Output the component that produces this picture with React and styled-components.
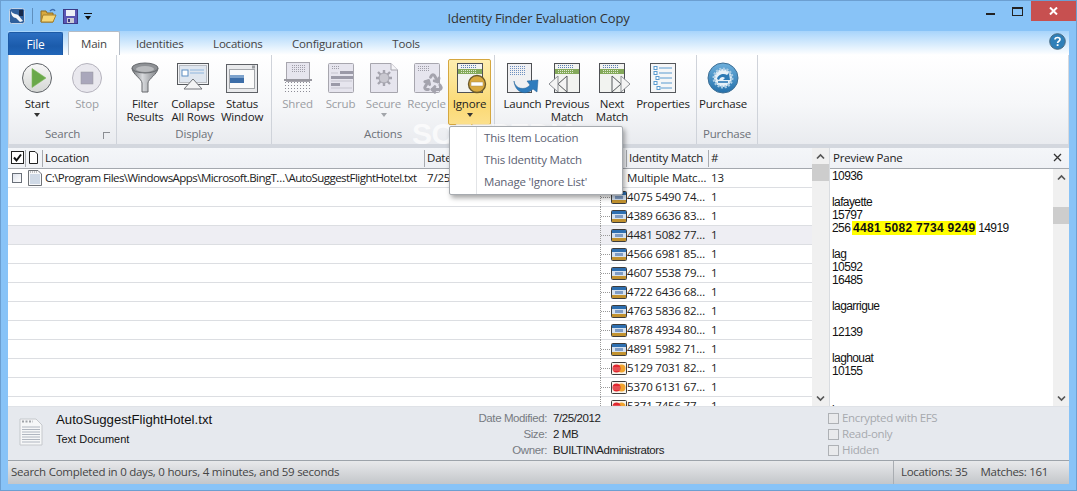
import React from 'react'
import styled, { createGlobalStyle } from 'styled-components'
import { Recycle } from 'lucide-react'

const GlobalStyle = createGlobalStyle`
    html, body {
        margin: 0;
        padding: 0;
        background: #88c3f7;
    }
    * {
        box-sizing: border-box;
    }
`

const uiFont = `"Open Sans", "Noto Sans", "Liberation Sans", sans-serif`
const docFont = `"Liberation Sans", Arial, sans-serif`

const Window = styled.div`
    position: relative;
    display: flex;
    flex-direction: column;
    width: 1077px;
    height: 491px;
    overflow: hidden;
    background: #88c3f7;
    border: 1px solid #6c9fd1;
    font-family: ${uiFont};
    font-size: 11.5px;
    letter-spacing: -0.2px;
    color: #222;
`

const TitleBar = styled.div`
    display: flex;
    align-items: flex-start;
    height: 30px;
    padding-left: 8px;
`

const QuickBar = styled.div`
    display: flex;
    align-items: center;
    gap: 6px;
    width: 100px;
    height: 30px;
`

const QuickSep = styled.div`
    width: 1px;
    height: 16px;
    margin: 0 1px;
    background: #5f8fbd;
`

const QuickArrow = styled.div`
    width: 8px;
    height: 7px;
    border-top: 1px solid #111;
    position: relative;
    &::after {
        content: '';
        position: absolute;
        left: 1px;
        top: 2px;
        border: 3px solid transparent;
        border-top: 4px solid #111;
    }
`

const Title = styled.div`
    flex: 1;
    padding: 8px 0 0 0;
    margin-left: -8px;
    text-align: center;
    font-size: 13px;
    color: #333;
`

const WindowControls = styled.div`
    display: flex;
    align-items: flex-start;
    width: 100px;
    justify-content: flex-end;
`

const ControlButton = styled.div`
    display: flex;
    align-items: center;
    justify-content: center;
    width: ${(p) => p.$w}px;
    height: 20px;
    background: ${(p) => (p.$close ? '#c75050' : 'transparent')};
`

const TabStrip = styled.div`
    display: flex;
    align-items: flex-end;
    height: 24px;
    margin: 0 7px;
    background: linear-gradient(#a7d4fb, #dceefd 60%, #ffffff);
    position: relative;
    z-index: 1;
    margin-bottom: -1px;
`

const FileTab = styled.div`
    display: flex;
    align-items: center;
    justify-content: center;
    width: 55px;
    height: 23px;
    margin-right: 5px;
    border: 1px solid #1c5aa6;
    border-bottom: none;
    border-radius: 2px 2px 0 0;
    background: linear-gradient(#2c6fc2, #1b5bab 60%, #2166b8);
    color: #fff;
    font-size: 12px;
`

const Tab = styled.div`
    display: flex;
    align-items: center;
    height: 24px;
    padding: ${(p) => (p.$active ? '0 12px' : '0 13.75px')};
    margin-right: ${(p) => (p.$active ? 1.25 : 0)}px;
    background: ${(p) => (p.$active ? '#fff' : 'transparent')};
    border: ${(p) => (p.$active ? '1px solid #b4bcc6' : '1px solid transparent')};
    border-bottom: none;
    border-radius: 2px 2px 0 0;
    color: #444;
`

const HelpIcon = styled.div`
    position: absolute;
    right: 3px;
    top: 2px;
    height: 17px;
`

const Ribbon = styled.div`
    display: flex;
    height: 90px;
    margin: 0 7px;
    background: linear-gradient(#ffffff, #f6f7f9 55%, #e9ebef);
    border-top: 1px solid #8895a1;
    border-right: 1px solid #d6d9de;
    border-left: 1px solid #d6d9de;
`

const Group = styled.div`
    position: relative;
    display: flex;
    flex-direction: column;
    width: ${(p) => p.$w}px;
    padding: 4px 0 0 ${(p) => p.$pad}px;
    border-right: 1px solid #cfd3da;
`

const ButtonRow = styled.div`
    display: flex;
    height: 66px;
`

const RibbonButton = styled.div`
    display: flex;
    flex-direction: column;
    align-items: center;
    width: ${(p) => p.$w}px;
    height: 66px;
    padding-top: 3px;
    line-height: 13px;
    text-align: center;
    color: ${(p) => (p.$off ? '#9a9da3' : '#222')};
    ${(p) =>
        p.$hot &&
        `background: linear-gradient(#fdeeb0, #fbd974 70%, #fce08c);
         border: 1px solid #d5a73f;
         border-radius: 2px;
         padding-top: 2px;`}
`

const ButtonIcon = styled.div`
    height: 32px;
    margin-bottom: 3px;
`

const DownArrow = styled.div`
    margin-top: 3px;
    border: 3px solid transparent;
    border-top: 4px solid ${(p) => (p.$off ? '#a2a5aa' : '#333')};
`

const GroupLabel = styled.div`
    height: 14px;
    margin: 2px 0 0 ${(p) => -p.$pad}px;
    line-height: 14px;
    text-align: center;
    color: #6d7178;
`

const Launcher = styled.div`
    position: absolute;
    right: 6px;
    bottom: 5px;
    width: 7px;
    height: 7px;
    border-left: 1px solid #8a8d92;
    border-top: 1px solid #8a8d92;
`

const SplitGap = styled.div`
    height: 4px;
    margin: 0 7px;
    background: #d3d7de;
`

const Body = styled.div`
    display: flex;
    height: 258px;
    margin: 0 7px;
    background: #fff;
`

const ListPane = styled.div`
    display: flex;
    flex-direction: column;
    width: 804px;
    overflow: hidden;
`

const HeaderRow = styled.div`
    display: grid;
    grid-template-columns: 18px 17px 382px 202px 82px 1fr;
    height: 21px;
    flex: none;
    background: linear-gradient(#f4f6f9, #eff1f5);
    border-bottom: 1px solid #a4a8ae;
`

const HeaderCell = styled.div`
    display: flex;
    align-items: center;
    margin: 2px 0;
    padding-left: ${(p) => p.$pad ?? 2}px;
    padding-bottom: 2px;
    border-right: 1px solid ${(p) => (p.$last ? 'transparent' : '#a8abb0')};
    color: #222;
    white-space: nowrap;
`

const Row = styled.div`
    display: grid;
    grid-template-columns: 18px 17px 382px 175px 10px 17px 82px 1fr;
    align-items: center;
    flex: none;
    height: 19px;
    background: ${(p) => (p.$selected ? '#eeeef3' : '#fff')};
    border-bottom: 1px solid #dcdee2;
    white-space: nowrap;
`

const CheckCell = styled.div`
    display: flex;
    justify-content: center;
`

const RowCheck = styled.div`
    width: 10px;
    height: 10px;
    border: 1px solid #6a7079;
    background: linear-gradient(135deg, #dfe3ec, #fff);
`

const TextCell = styled.div`
    padding: 0 0 2px ${(p) => p.$pad ?? 2}px;
    overflow: hidden;
    letter-spacing: ${(p) => (p.$tight ? '-0.55px' : 'inherit')};
`

const TreeCell = styled.div`
    position: relative;
    align-self: stretch;
    margin-bottom: -1px;
    border-left: 1px dotted #999;
    &::after {
        content: '';
        position: absolute;
        left: 0;
        right: 0;
        top: 9px;
        border-top: 1px dotted #999;
    }
`

const ScrollTrack = styled.div`
    display: flex;
    flex-direction: column;
    align-items: center;
    flex: none;
    width: ${(p) => p.$w}px;
    background: #f0f0f0;
    border-right: ${(p) => (p.$edge ? '1px solid #d9dce0' : 'none')};
`

const ScrollArrow = styled.div`
    display: flex;
    align-items: center;
    justify-content: center;
    flex: none;
    height: 16px;
    width: 100%;
`

const ScrollThumb = styled.div`
    flex: none;
    width: 100%;
    height: 17px;
    margin: ${(p) => p.$top}px 0 auto;
    background: #cdcdcd;
`

const PreviewPane = styled.div`
    display: flex;
    flex-direction: column;
    flex: 1;
    min-width: 0;
`

const PreviewHeader = styled.div`
    display: flex;
    align-items: center;
    justify-content: space-between;
    flex: none;
    height: 21px;
    padding: 0 7px 2px 3px;
    background: linear-gradient(#f4f6f9, #eff1f5);
    border-bottom: 1px solid #a4a8ae;
`

const PreviewBody = styled.div`
    display: flex;
    flex: 1;
    min-height: 0;
`

const PreviewText = styled.div`
    flex: 1;
    padding: 1px 0 0 2px;
    overflow: hidden;
    font-family: ${docFont};
    font-size: 12px;
    letter-spacing: -0.6px;
    line-height: 13px;
    white-space: pre;
    color: #111;
`

const Hit = styled.b`
    padding: 0 1px;
    margin: 0 -1px;
    letter-spacing: 0.3px;
    background: #ffff00;
`

const Details = styled.div`
    display: grid;
    grid-template-columns: 47px 385px 107px 1fr 241px;
    height: 54px;
    margin: 0 7px;
    background: #e6e9ee;
    border-top: 1px solid #dfe2e7;
`

const DetailIcon = styled.div`
    padding: 11px 0 0 11px;
`

const FileName = styled.div`
    padding: 4px 0 0 1px;
    font-family: ${docFont};
    font-size: 13.2px;
    letter-spacing: 0;
    line-height: 18px;
    color: #111;
`

const FileKind = styled.div`
    padding: 2px 0 0 1px;
    font-family: ${docFont};
    font-size: 11px;
    letter-spacing: 0;
    line-height: 16px;
    color: #111;
`

const MetaColumn = styled.div`
    display: flex;
    flex-direction: column;
    padding-top: 3px;
    font-family: ${docFont};
    letter-spacing: -0.4px;
    text-align: ${(p) => (p.$labels ? 'right' : 'left')};
    padding-left: ${(p) => (p.$labels ? 0 : 6)}px;
    color: ${(p) => (p.$labels ? '#777b82' : '#222')};
    line-height: 16px;
`

const Attributes = styled.div`
    display: flex;
    flex-direction: column;
    padding-top: 3px;
    letter-spacing: -0.35px;
    line-height: 16px;
    color: #a6a9ae;
`

const Attribute = styled.div`
    display: flex;
    align-items: center;
    gap: 3px;
`

const AttrBox = styled.div`
    width: 11px;
    height: 11px;
    border: 1px solid #aeb1b5;
    background: #e9eaec;
`

const StatusBar = styled.div`
    display: flex;
    align-items: center;
    height: 24px;
    margin: 0 7px;
    padding-left: 3px;
    background: linear-gradient(#e8e9eb, #c3c6ca);
    border-top: 1px solid #9da3aa;
    color: #444;
`

const StatusText = styled.div`
    flex: 1;
    padding-bottom: 2px;
    letter-spacing: -0.25px;
`

const StatusPanel = styled.div`
    display: flex;
    gap: 13px;
    width: 176px;
    height: 100%;
    padding: 0 0 2px 7px;
    align-items: center;
    letter-spacing: -0.3px;
    border-left: 1px solid #a9adb2;
`

const Menu = styled.div`
    position: absolute;
    left: 448px;
    top: 125px;
    width: 174px;
    height: 69px;
    background: #fff;
    border: 1px solid #a7abb0;
    box-shadow: 2px 3px 5px rgba(0, 0, 0, 0.35);
    border-radius: 2px;
    z-index: 5;
`

const MenuGutter = styled.div`
    position: absolute;
    left: 26px;
    top: 0;
    bottom: 0;
    border-left: 1px solid #e2e4e7;
`

const MenuItem = styled.div`
    height: 22px;
    line-height: 22px;
    padding-left: 34px;
    color: #5b6172;
`

const Watermark = styled.div`
    position: absolute;
    left: 411px;
    top: 116px;
    font-family: ${docFont};
    font-size: 30px;
    font-weight: bold;
    letter-spacing: -0.5px;
    line-height: 34px;
    color: rgba(255, 255, 255, 0.7);
    z-index: 4;
    pointer-events: none;
`

const StartIcon = () => (
    <svg width="32" height="32" viewBox="0 0 32 32">
        <defs>
            <linearGradient id="startFill" x1="0" y1="0" x2="0" y2="1">
                <stop offset="0" stopColor="#f8f8f8" />
                <stop offset="1" stopColor="#d4d6d4" />
            </linearGradient>
        </defs>
        <circle cx="16" cy="16" r="14.5" fill="url(#startFill)" stroke="#5f6368" />
        <path d="M11 6.5 L25 16 L11 25.5 Z" fill="#6aa84a" stroke="#7fbb5c" strokeWidth="0.6" />
    </svg>
)

const StopIcon = () => (
    <svg width="32" height="32" viewBox="0 0 32 32">
        <circle cx="16" cy="16" r="14.5" fill="#e9e8ee" stroke="#b5b3bd" />
        <rect x="10" y="10" width="12" height="12" fill="#a9a7bb" stroke="#98969f" strokeWidth="0.5" />
    </svg>
)

const FunnelIcon = () => (
    <svg width="30" height="32" viewBox="0 0 30 32">
        <defs>
            <linearGradient id="funnelFill" x1="0" y1="0" x2="1" y2="0">
                <stop offset="0" stopColor="#6d7074" />
                <stop offset="0.4" stopColor="#d8dadd" />
                <stop offset="1" stopColor="#7d8084" />
            </linearGradient>
        </defs>
        <path d="M2 6 C2 12 12 17 12 21 L12 30 L18 30 L18 21 C18 17 28 12 28 6 Z" fill="url(#funnelFill)" stroke="#66696d" />
        <ellipse cx="15" cy="6" rx="13" ry="5" fill="#8e9195" stroke="#66696d" />
        <ellipse cx="15" cy="7" rx="9" ry="3" fill="#b9bbbe" />
    </svg>
)

const CollapseIcon = () => (
    <svg width="34" height="32" viewBox="0 0 34 32">
        <rect x="1.5" y="1.5" width="31" height="21" fill="#f2f3f5" stroke="#55585c" />
        <rect x="3.5" y="3.5" width="27" height="17" fill="#dfe6ef" stroke="#b8bcc2" />
        <rect x="6" y="8" width="6" height="6" fill="#fff" stroke="#5f8fc4" />
        <path d="M14 8 H28 M14 11 H28" stroke="#8fb6de" />
        <path d="M17 17 L26 27 H8 Z" fill="#f3f4f5" stroke="#72757a" />
    </svg>
)

const StatusIcon = () => (
    <svg width="32" height="32" viewBox="0 0 32 32">
        <rect x="0.5" y="2.5" width="31" height="28" fill="#e9eaec" stroke="#5e6166" />
        <rect x="3.5" y="7.5" width="25" height="19" fill="#fbfbfb" stroke="#a3a6aa" />
        <rect x="4" y="13" width="14" height="8" fill="#3d6ea8" />
        <rect x="4" y="13" width="14" height="3" fill="#7ea3cc" />
        <rect x="26" y="3.5" width="3" height="3" fill="#9a9da1" />
    </svg>
)

const GreyPage = ({ children }) => (
    <svg width="30" height="32" viewBox="0 0 30 32" overflow="visible">
        <rect x="2.5" y="1.5" width="25" height="29" rx="1" fill="#e6e5ee" stroke="#a7a6ae" />
        {children}
    </svg>
)

const DotGrid = ({ x, y, cols, rows, color = '#9f9ea8', step = 2 }) => (
    <g fill={color}>
        {Array.from({ length: rows }).flatMap((_, r) =>
            Array.from({ length: cols }).map((_, c) => (
                <rect key={`${r}-${c}`} x={x + c * step} y={y + r * step} width="1" height="1" />
            ))
        )}
    </g>
)

const ShredIcon = () => (
    <svg width="30" height="32" viewBox="0 0 30 32">
        <rect x="3.5" y="0.5" width="23" height="19" fill="#e6e5ee" stroke="#a7a6ae" />
        <DotGrid x={9} y={3} cols={7} rows={4} />
        <rect x="1" y="17" width="28" height="2" fill="#98979f" />
        <DotGrid x={2} y={20} cols={9} rows={5} color="#8d8c96" step={3} />
    </svg>
)

const ScrubIcon = () => (
    <GreyPage>
        <DotGrid x={6} y={4} cols={4} rows={2} />
        <rect x="14" y="9" width="13" height="3" fill="#9b9aa8" />
        <rect x="5" y="14" width="22" height="3" fill="#9b9aa8" />
        <rect x="5" y="21" width="9" height="3" fill="#9b9aa8" />
        <path d="M5 11 H12 M5 19 H26 M5 26 H26" stroke="#c6c5cf" />
    </GreyPage>
)

const SecureIcon = () => (
    <svg width="32" height="32" viewBox="0 0 32 32">
        <path d="M2.5 1.5 H23 L29.5 8 V30.5 H2.5 Z" fill="#e6e5ee" stroke="#a7a6ae" />
        <path d="M23 1.5 V8 H29.5" fill="#f5f5f8" stroke="#a7a6ae" />
        <path d="M16 8 V24 M8 16 H24 M10 10 L22 22 M22 10 L10 22" stroke="#a5a4ae" strokeWidth="2.4" />
        <circle cx="16" cy="16" r="5" fill="#c9c8d0" stroke="#a5a4ae" />
    </svg>
)

const RecycleIcon = () => (
    <GreyPage>
        <DotGrid x={6} y={4} cols={6} rows={3} />
        <Recycle x={9} y={10} width={24} height={22} color="#a4a3ad" strokeWidth={3.2} />
    </GreyPage>
)

const GreenPage = ({ children, w = 30 }) => (
    <svg width={w} height="32" viewBox={`0 0 ${w} 32`} overflow="visible">
        <rect x="2.5" y="1.5" width="25" height="29" fill="#f2f3f0" stroke="#4e5054" />
        <rect x="3" y="7" width="24" height="5" fill="#84a95a" />
        <DotGrid x={6} y={3} cols={8} rows={2} color="#5a7fb5" />
        <DotGrid x={6} y={8} cols={8} rows={2} color="#e0ecd0" />
        {children}
    </svg>
)

const IgnoreIcon = () => (
    <GreenPage>
        <circle cx="22" cy="22" r="8.5" fill="#d9a93e" stroke="#6c5a2a" strokeWidth="1.4" />
        <rect x="16" y="20" width="12" height="4" fill="#fff" stroke="#a98c50" strokeWidth="0.5" />
    </GreenPage>
)

const LaunchIcon = () => (
    <svg width="34" height="32" viewBox="0 0 34 32">
        <rect x="1.5" y="1.5" width="24" height="29" fill="#f0f0f2" stroke="#4e5054" />
        <DotGrid x={4} y={4} cols={8} rows={5} color="#6d8fc0" />
        <path d="M8 19 C9 27 19 29 24 23 L21 19 L32 18 L31 30 L27 27 C20 34 9 31 8 19 Z" fill="#2f7cbd" stroke="#1f5f97" strokeWidth="0.5" />
    </svg>
)

const PreviousIcon = () => (
    <GreenPage>
        <path d="M15 14 L6 22 L15 30 Z" fill="#f4f4f4" stroke="#55585c" />
        <path d="M6 14 L-3 22 L6 30 Z" fill="#f4f4f4" stroke="#8d9095" />
    </GreenPage>
)

const NextIcon = () => (
    <GreenPage>
        <path d="M15 14 L24 22 L15 30 Z" fill="#f4f4f4" stroke="#55585c" />
        <path d="M24 14 L33 22 L24 30 Z" fill="#f4f4f4" stroke="#8d9095" />
    </GreenPage>
)

const PropertiesIcon = () => (
    <svg width="30" height="32" viewBox="0 0 30 32">
        <rect x="2.5" y="1.5" width="25" height="29" fill="#f5f6f7" stroke="#55585c" />
        <path d="M11 6 H24 M11 11 H24 M12 16 H24 M13 21 H24 M13 26 H24" stroke="#5b9bd0" />
        <g fill="#fff" stroke="#5b9bd0">
            <rect x="6" y="4.5" width="3" height="3" />
            <rect x="6" y="9.5" width="3" height="3" />
            <rect x="8" y="14.5" width="3" height="3" />
            <rect x="6" y="19.5" width="3" height="3" />
            <rect x="9" y="24.5" width="3" height="3" />
        </g>
    </svg>
)

const PurchaseIcon = () => (
    <svg width="34" height="32" viewBox="0 0 34 32">
        <defs>
            <linearGradient id="buyFill" x1="0" y1="0" x2="0" y2="1">
                <stop offset="0" stopColor="#6eb0dc" />
                <stop offset="1" stopColor="#2470ab" />
            </linearGradient>
        </defs>
        <circle cx="17" cy="16" r="15" fill="url(#buyFill)" stroke="#3f6f94" />
        <circle cx="17" cy="16" r="9" fill="#e8f1f8" stroke="#a9cbe3" strokeWidth="3" strokeDasharray="2 1.5" />
        <path d="M11 17 C12 12 18 11 21 13 L23 11 L24 18 L17 18 L19 16 C17 14 14 15 13 18 Z" fill="#2d7ab5" />
        <path d="M12 20 H22" stroke="#2d7ab5" strokeWidth="1.6" />
    </svg>
)

const AppLogo = () => (
    <svg width="16" height="16" viewBox="0 0 16 16">
        <rect x="0.5" y="0.5" width="15" height="15" rx="2" fill="#2f5f9c" stroke="#c3d3e6" />
        <path d="M2 3 C4 7 8 5 10 8 L14 13 L11 14 L7 10 C4 10 2 7 2 3 Z" fill="#f2f5f9" />
        <rect x="10" y="2" width="4" height="6" fill="#16294a" />
    </svg>
)

const FolderIcon = () => (
    <svg width="17" height="16" viewBox="0 0 17 16">
        <path d="M1 3 H6 L7 5 H13 V14 H1 Z" fill="#d8a93f" stroke="#8f6b1f" />
        <path d="M3 7 H16 L13 14 H1 Z" fill="#f6d676" stroke="#a57f2a" />
        <path d="M10 3 C12 1 14 1 15 3" fill="none" stroke="#3e6fb0" strokeWidth="1.4" />
    </svg>
)

const SaveIcon = () => (
    <svg width="15" height="15" viewBox="0 0 15 15">
        <rect x="0.5" y="0.5" width="14" height="14" fill="#5a56b4" stroke="#3c3a86" />
        <rect x="3" y="1" width="9" height="6" fill="#eef0f6" />
        <rect x="4" y="9" width="7" height="5" fill="#c9cbd6" />
        <rect x="5" y="10" width="2" height="3" fill="#3c3a86" />
    </svg>
)

const HelpGlyph = () => (
    <svg width="17" height="17" viewBox="0 0 17 17">
        <circle cx="8.5" cy="8.5" r="7.8" fill="#2f7fb8" stroke="#49697f" />
        <path d="M6 6.5 C6 3.8 11 3.8 11 6.5 C11 8.3 8.6 8.2 8.6 10" fill="none" stroke="#fff" strokeWidth="1.7" />
        <rect x="7.7" y="11.2" width="1.8" height="1.8" fill="#fff" />
    </svg>
)

const Chevron = ({ up }) => (
    <svg width="9" height="7" viewBox="0 0 9 7">
        <path d={up ? 'M1 5.5 L4.5 2 L8 5.5' : 'M1 1.5 L4.5 5 L8 1.5'} fill="none" stroke="#555" strokeWidth="1.7" />
    </svg>
)

const VisaIcon = () => (
    <svg width="16" height="13" viewBox="0 0 16 13">
        <rect x="0.5" y="0.5" width="15" height="12" rx="1" fill="#d5e1ef" stroke="#3d3d3d" />
        <rect x="1" y="1" width="14" height="3" fill="#2e6fb0" />
        <rect x="1" y="9" width="14" height="3" fill="#c2922f" />
        <rect x="4" y="5" width="8" height="3" fill="#7f9cc4" />
    </svg>
)

const MasterCardIcon = () => (
    <svg width="16" height="13" viewBox="0 0 16 13">
        <rect x="0.5" y="0.5" width="15" height="12" rx="1" fill="#f7f3ea" stroke="#3d3d3d" />
        <circle cx="10.5" cy="6.5" r="4" fill="#f0a32e" />
        <circle cx="5.5" cy="6.5" r="4" fill="#e0262f" />
        <path d="M2 6 H9 M2 8 H9" stroke="#f4b0a8" strokeWidth="0.6" />
    </svg>
)

const TextFileIcon = () => (
    <svg width="14" height="16" viewBox="0 0 14 16">
        <path d="M0.5 0.5 H10 L13.5 4 V15.5 H0.5 Z" fill="#f7f8fa" stroke="#6f7378" />
        <path d="M2 5 H12 M2 7 H12 M2 9 H12 M2 11 H12 M2 13 H12" stroke="#a9bcd3" />
        <path d="M2 2 H9" stroke="#888" strokeDasharray="1 1" />
    </svg>
)

const LargeFileIcon = () => (
    <svg width="24" height="28" viewBox="0 0 24 28">
        <path d="M1 1 H17 L23 7 V27 H1 Z" fill="#f6f7f8" stroke="#c5c8cc" />
        <path d="M3 9 H21 M3 11.5 H21 M3 14 H21 M3 16.5 H21 M3 19 H21 M3 21.5 H21 M3 24 H21" stroke="#b0b6c0" />
        <path d="M3 3.5 H14" stroke="#a0a3a8" strokeWidth="2" strokeDasharray="2 1.5" />
    </svg>
)

const matches = [
    ['4075 5490 74…', 'visa'],
    ['4389 6636 83…', 'visa'],
    ['4481 5082 77…', 'visa'],
    ['4566 6981 85…', 'visa'],
    ['4607 5538 79…', 'visa'],
    ['4722 6436 68…', 'visa'],
    ['4763 5836 82…', 'visa'],
    ['4878 4934 80…', 'visa'],
    ['4891 5982 71…', 'visa'],
    ['5129 7031 82…', 'mc'],
    ['5370 6131 67…', 'mc'],
    ['5371 7456 77…', 'mc'],
]

function RBtn({ w, icon, off, hot, arrow, children }) {
    return (
        <RibbonButton $w={w} $off={off} $hot={hot}>
            <ButtonIcon>{icon}</ButtonIcon>
            {children}
            {arrow && <DownArrow $off={off} />}
        </RibbonButton>
    )
}

export default function App() {
    return (
        <>
            <GlobalStyle />
            <Window>
                <TitleBar>
                    <QuickBar>
                        <AppLogo />
                        <QuickSep />
                        <FolderIcon />
                        <SaveIcon />
                        <QuickArrow />
                    </QuickBar>
                    <Title>Identity Finder Evaluation Copy</Title>
                    <WindowControls>
                        <ControlButton $w={27}>
                            <svg width="9" height="10" viewBox="0 0 9 10">
                                <rect y="7" width="9" height="2" fill="#222" />
                            </svg>
                        </ControlButton>
                        <ControlButton $w={27}>
                            <svg width="11" height="9" viewBox="0 0 11 9">
                                <rect x="0.5" y="0.5" width="10" height="8" fill="none" stroke="#222" />
                                <rect width="11" height="2" fill="#222" />
                            </svg>
                        </ControlButton>
                        <ControlButton $w={45} $close>
                            <svg width="9" height="8" viewBox="0 0 9 8">
                                <path d="M1 0.5 L8 7.5 M8 0.5 L1 7.5" stroke="#fff" strokeWidth="2" />
                            </svg>
                        </ControlButton>
                    </WindowControls>
                </TitleBar>
                <TabStrip>
                    <FileTab>File</FileTab>
                    <Tab $active>Main</Tab>
                    <Tab>Identities</Tab>
                    <Tab>Locations</Tab>
                    <Tab>Configuration</Tab>
                    <Tab>Tools</Tab>
                    <HelpIcon>
                        <HelpGlyph />
                    </HelpIcon>
                </TabStrip>
                <Ribbon>
                    <Group $w={108} $pad={3}>
                        <ButtonRow>
                            <RBtn w={50} icon={<StartIcon />} arrow>Start</RBtn>
                            <RBtn w={50} icon={<StopIcon />} off>Stop</RBtn>
                        </ButtonRow>
                        <GroupLabel $pad={3}>Search</GroupLabel>
                        <Launcher />
                    </Group>
                    <Group $w={155} $pad={4}>
                        <ButtonRow>
                            <RBtn w={48} icon={<FunnelIcon />}>Filter<br />Results</RBtn>
                            <RBtn w={48} icon={<CollapseIcon />}>Collapse<br />All Rows</RBtn>
                            <RBtn w={50} icon={<StatusIcon />}>Status<br />Window</RBtn>
                        </ButtonRow>
                        <GroupLabel $pad={4}>Display</GroupLabel>
                    </Group>
                    <Group $w={223} $pad={4}>
                        <ButtonRow>
                            <RBtn w={43} icon={<ShredIcon />} off>Shred</RBtn>
                            <RBtn w={43} icon={<ScrubIcon />} off>Scrub</RBtn>
                            <RBtn w={43} icon={<SecureIcon />} off arrow>Secure</RBtn>
                            <RBtn w={43} icon={<RecycleIcon />} off>Recycle</RBtn>
                            <RBtn w={43} icon={<IgnoreIcon />} hot arrow>Ignore</RBtn>
                        </ButtonRow>
                        <GroupLabel $pad={4}>Actions</GroupLabel>
                    </Group>
                    <Group $w={202} $pad={6}>
                        <ButtonRow>
                            <RBtn w={43} icon={<LaunchIcon />}>Launch</RBtn>
                            <RBtn w={46} icon={<PreviousIcon />}>Previous<br />Match</RBtn>
                            <RBtn w={44} icon={<NextIcon />}>Next<br />Match</RBtn>
                            <RBtn w={58} icon={<PropertiesIcon />}>Properties</RBtn>
                        </ButtonRow>
                    </Group>
                    <Group $w={61} $pad={0}>
                        <ButtonRow>
                            <RBtn w={52} icon={<PurchaseIcon />}>Purchase</RBtn>
                        </ButtonRow>
                        <GroupLabel $pad={0}>Purchase</GroupLabel>
                    </Group>
                </Ribbon>
                <SplitGap />
                <Body>
                    <ListPane>
                        <HeaderRow>
                            <HeaderCell $pad={3}>
                                <svg width="13" height="13" viewBox="0 0 13 13">
                                    <rect x="0.5" y="0.5" width="12" height="12" fill="#fff" stroke="#222" />
                                    <path d="M3 6.5 L5.5 9.5 L10 3.5" fill="none" stroke="#111" strokeWidth="2" />
                                </svg>
                            </HeaderCell>
                            <HeaderCell $pad={3}>
                                <svg width="9" height="13" viewBox="0 0 9 13">
                                    <path d="M0.5 0.5 H6 L8.5 3 V12.5 H0.5 Z" fill="#fff" stroke="#222" />
                                </svg>
                            </HeaderCell>
                            <HeaderCell>Location</HeaderCell>
                            <HeaderCell>Date</HeaderCell>
                            <HeaderCell>Identity Match</HeaderCell>
                            <HeaderCell $last>#</HeaderCell>
                        </HeaderRow>
                        <Row>
                            <CheckCell><RowCheck /></CheckCell>
                            <CheckCell><TextFileIcon /></CheckCell>
                            <TextCell $tight>C:\Program Files\WindowsApps\Microsoft.BingT…\AutoSuggestFlightHotel.txt</TextCell>
                            <TextCell>7/25/2012</TextCell>
                            <div />
                            <div />
                            <TextCell $pad={0}>Multiple Matc…</TextCell>
                            <TextCell>13</TextCell>
                        </Row>
                        {matches.map(([value, card], i) => (
                            <Row key={value} $selected={i === 2}>
                                <div />
                                <div />
                                <div />
                                <div />
                                <TreeCell />
                                <CheckCell>{card === 'visa' ? <VisaIcon /> : <MasterCardIcon />}</CheckCell>
                                <TextCell $pad={0}>{value}</TextCell>
                                <TextCell>1</TextCell>
                            </Row>
                        ))}
                    </ListPane>
                    <ScrollTrack $w={18} $edge>
                        <ScrollArrow><Chevron up /></ScrollArrow>
                        <ScrollThumb $top={0} />
                        <ScrollArrow><Chevron /></ScrollArrow>
                    </ScrollTrack>
                    <PreviewPane>
                        <PreviewHeader>
                            Preview Pane
                            <svg width="9" height="9" viewBox="0 0 9 9">
                                <path d="M1 1 L8 8 M8 1 L1 8" stroke="#333" strokeWidth="1.3" />
                            </svg>
                        </PreviewHeader>
                        <PreviewBody>
                            <PreviewText>
                                {'10936\n\nlafayette\n15797\n256 '}
                                <Hit>4481 5082 7734 9249</Hit>
                                {' 14919\n\nlag\n10592\n16485\n\nlagarrigue\n\n12139\n\nlaghouat\n10155\n\n\nl'}
                            </PreviewText>
                            <ScrollTrack $w={16}>
                                <ScrollArrow><Chevron up /></ScrollArrow>
                                <ScrollThumb $top={22} />
                                <ScrollArrow><Chevron /></ScrollArrow>
                            </ScrollTrack>
                        </PreviewBody>
                    </PreviewPane>
                </Body>
                <Details>
                    <DetailIcon><LargeFileIcon /></DetailIcon>
                    <div>
                        <FileName>AutoSuggestFlightHotel.txt</FileName>
                        <FileKind>Text Document</FileKind>
                    </div>
                    <MetaColumn $labels>
                        <div>Date Modified:</div>
                        <div>Size:</div>
                        <div>Owner:</div>
                    </MetaColumn>
                    <MetaColumn>
                        <div>7/25/2012</div>
                        <div>2 MB</div>
                        <div>BUILTIN\Administrators</div>
                    </MetaColumn>
                    <Attributes>
                        <Attribute><AttrBox />Encrypted with EFS</Attribute>
                        <Attribute><AttrBox />Read-only</Attribute>
                        <Attribute><AttrBox />Hidden</Attribute>
                    </Attributes>
                </Details>
                <StatusBar>
                    <StatusText>Search Completed in 0 days, 0 hours, 4 minutes, and 59 seconds</StatusText>
                    <StatusPanel>
                        <span>Locations: 35</span>
                        <span>Matches: 161</span>
                    </StatusPanel>
                </StatusBar>
                <Menu>
                    <MenuGutter />
                    <MenuItem>This Item Location</MenuItem>
                    <MenuItem>This Identity Match</MenuItem>
                    <MenuItem>Manage 'Ignore List'</MenuItem>
                </Menu>
                <Watermark>SOFTPEDIA</Watermark>
            </Window>
        </>
    )
}
